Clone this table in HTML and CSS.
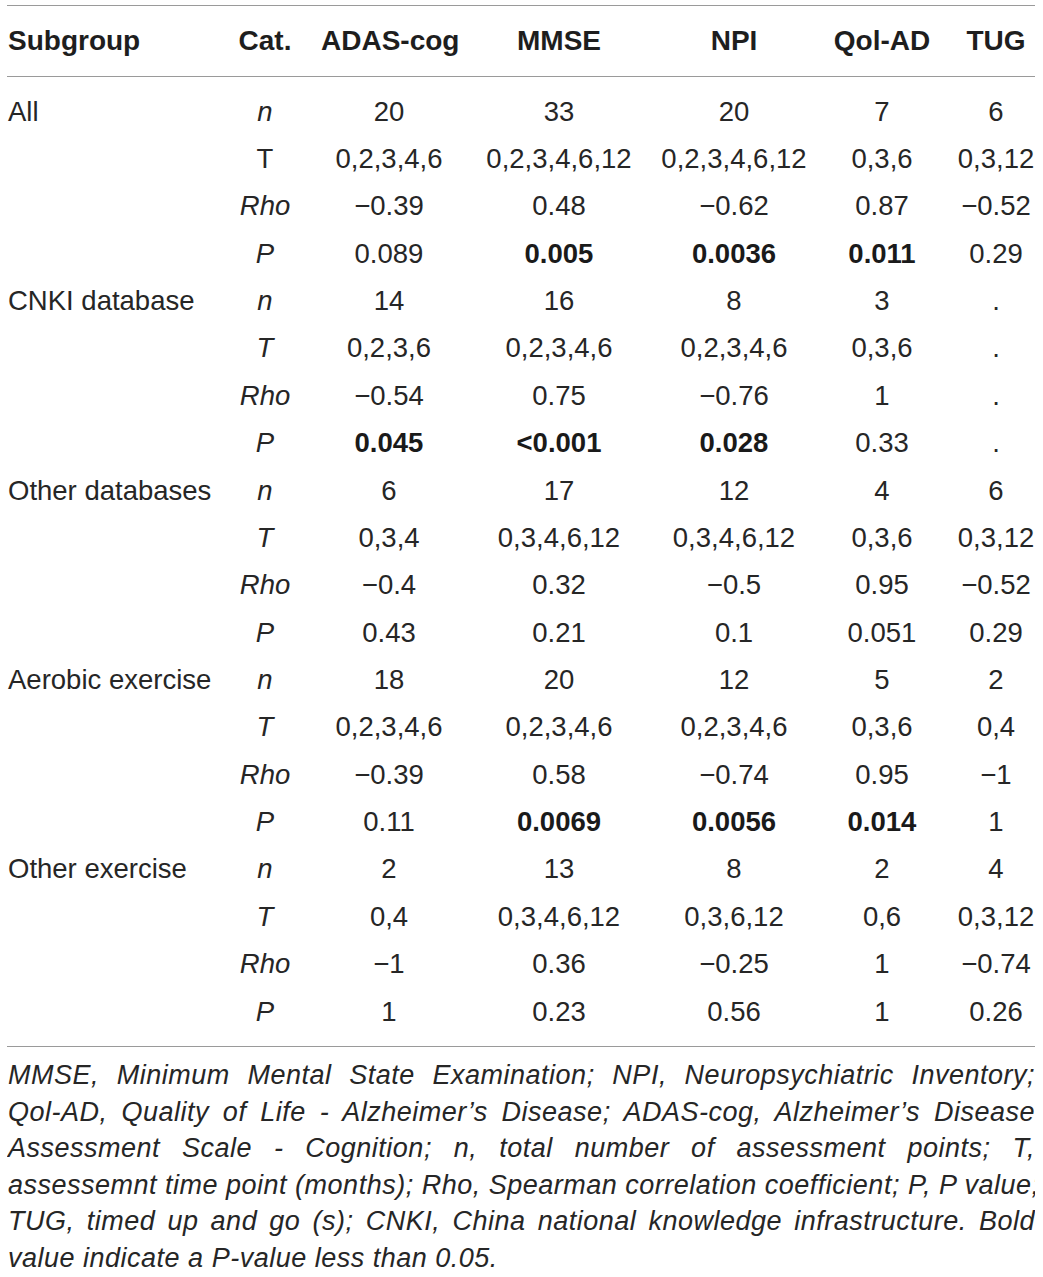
FILE: index.html
```html
<!DOCTYPE html>
<html lang="en">
<head>
<meta charset="utf-8">
<title>Subgroup correlation table</title>
<link rel="stylesheet" href="styles.css">
</head>
<body>
<div class="wrap">
<table class="tbl">
<colgroup>
<col class="c-sub"><col class="c-cat"><col class="c-adas"><col class="c-mmse"><col class="c-npi"><col class="c-qol"><col class="c-tug">
</colgroup>
<thead>
<tr><th class="left">Subgroup</th><th>Cat.</th><th>ADAS-cog</th><th>MMSE</th><th>NPI</th><th>Qol-AD</th><th>TUG</th></tr>
</thead>
<tbody>
<tr class="first"><td class="left">All</td><td class="i">n</td><td>20</td><td>33</td><td>20</td><td>7</td><td>6</td></tr>
<tr><td></td><td>T</td><td>0,2,3,4,6</td><td>0,2,3,4,6,12</td><td>0,2,3,4,6,12</td><td>0,3,6</td><td>0,3,12</td></tr>
<tr><td></td><td class="i">Rho</td><td>−0.39</td><td>0.48</td><td>−0.62</td><td>0.87</td><td>−0.52</td></tr>
<tr><td></td><td class="i">P</td><td>0.089</td><td class="b">0.005</td><td class="b">0.0036</td><td class="b">0.011</td><td>0.29</td></tr>
<tr><td class="left">CNKI database</td><td class="i">n</td><td>14</td><td>16</td><td>8</td><td>3</td><td>.</td></tr>
<tr><td></td><td class="i">T</td><td>0,2,3,6</td><td>0,2,3,4,6</td><td>0,2,3,4,6</td><td>0,3,6</td><td>.</td></tr>
<tr><td></td><td class="i">Rho</td><td>−0.54</td><td>0.75</td><td>−0.76</td><td>1</td><td>.</td></tr>
<tr><td></td><td class="i">P</td><td class="b">0.045</td><td class="b">&lt;0.001</td><td class="b">0.028</td><td>0.33</td><td>.</td></tr>
<tr><td class="left">Other databases</td><td class="i">n</td><td>6</td><td>17</td><td>12</td><td>4</td><td>6</td></tr>
<tr><td></td><td class="i">T</td><td>0,3,4</td><td>0,3,4,6,12</td><td>0,3,4,6,12</td><td>0,3,6</td><td>0,3,12</td></tr>
<tr><td></td><td class="i">Rho</td><td>−0.4</td><td>0.32</td><td>−0.5</td><td>0.95</td><td>−0.52</td></tr>
<tr><td></td><td class="i">P</td><td>0.43</td><td>0.21</td><td>0.1</td><td>0.051</td><td>0.29</td></tr>
<tr><td class="left">Aerobic exercise</td><td class="i">n</td><td>18</td><td>20</td><td>12</td><td>5</td><td>2</td></tr>
<tr><td></td><td class="i">T</td><td>0,2,3,4,6</td><td>0,2,3,4,6</td><td>0,2,3,4,6</td><td>0,3,6</td><td>0,4</td></tr>
<tr><td></td><td class="i">Rho</td><td>−0.39</td><td>0.58</td><td>−0.74</td><td>0.95</td><td>−1</td></tr>
<tr><td></td><td class="i">P</td><td>0.11</td><td class="b">0.0069</td><td class="b">0.0056</td><td class="b">0.014</td><td>1</td></tr>
<tr><td class="left">Other exercise</td><td class="i">n</td><td>2</td><td>13</td><td>8</td><td>2</td><td>4</td></tr>
<tr><td></td><td class="i">T</td><td>0,4</td><td>0,3,4,6,12</td><td>0,3,6,12</td><td>0,6</td><td>0,3,12</td></tr>
<tr><td></td><td class="i">Rho</td><td>−1</td><td>0.36</td><td>−0.25</td><td>1</td><td>−0.74</td></tr>
<tr class="last"><td></td><td class="i">P</td><td>1</td><td>0.23</td><td>0.56</td><td>1</td><td>0.26</td></tr>
</tbody>
</table>
<p class="note"><span class="ln">MMSE, Minimum Mental State Examination; NPI, Neuropsychiatric Inventory;</span> <span class="ln">Qol-AD, Quality of Life - Alzheimer’s Disease; ADAS-cog, Alzheimer’s Disease</span> <span class="ln">Assessment Scale - Cognition; n, total number of assessment points; T,</span> <span class="ln">assessemnt time point (months); Rho, Spearman correlation coefficient; P, P value;</span> <span class="ln">TUG, timed up and go (s); CNKI, China national knowledge infrastructure. Bold</span> <span class="ln end">value indicate a P-value less than 0.05.</span></p>
</div>
</body>
</html>
```

FILE: styles.css
```css
html, body {
  background: #ffffff;
}
body {
  margin: 5px 8px 0 7px;
  font-family: "Liberation Sans", Arial, Helvetica, sans-serif;
  color: #262626;
}
.wrap {
  width: 1028px;
}
.tbl {
  width: 1028px;
  border-collapse: collapse;
  table-layout: fixed;
  font-size: 27.5px;
}
.c-sub { width: 202px; }
.c-cat { width: 112px; }
.c-adas { width: 136px; }
.c-mmse { width: 204px; }
.c-npi { width: 146px; }
.c-qol { width: 150px; }
.c-tug { width: 78px; }

.tbl thead tr {
  border-top: 1px solid #9a9a9a;
  border-bottom: 1px solid #9a9a9a;
}
.tbl th {
  height: 70px;
  padding: 0;
  font-weight: bold;
  font-size: 28px;
  text-align: center;
  vertical-align: middle;
  white-space: nowrap;
  color: #1e1e1e;
}
.tbl td {
  height: 47.37px;
  padding: 0;
  text-align: center;
  vertical-align: middle;
  white-space: nowrap;
  line-height: 32px;
}
.tbl .left {
  text-align: left;
  padding-left: 1px;
}
.tbl .i {
  font-style: italic;
}
.tbl .b {
  font-weight: bold;
  color: #1a1a1a;
}
.tbl tr.first td {
  padding-top: 11px;
}
.tbl tr.last td {
  padding-bottom: 11px;
}
.tbl tr.last {
  border-bottom: 1px solid #9a9a9a;
}
.note {
  margin: 0;
  padding: 10px 0 0 1px;
  font-size: 27px;
  font-style: italic;
  letter-spacing: 0.5px;
  line-height: 36.5px;
  color: #262626;
}
.note .ln {
  display: block;
  white-space: nowrap;
  text-align: justify;
  text-align-last: justify;
}
.note .ln.end {
  text-align: left;
  text-align-last: left;
}
```
